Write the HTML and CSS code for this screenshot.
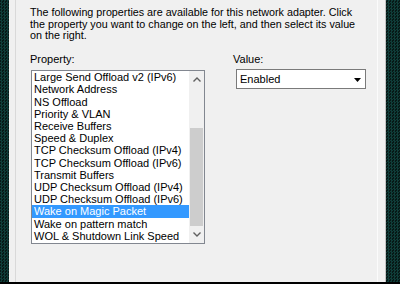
FILE: index.html
```html
<!DOCTYPE html>
<html lang="en">
  <head>
    <meta charset="utf-8">
    <title>Advanced - Network adapter properties</title>
    <link rel="stylesheet" href="styles.css">
  </head>
  <body>
    <div class="desk">
      <div class="dialog">
        <div class="page">
          <p class="intro">
            The following properties are available for this network adapter. Click<br>
            the property you want to change on the left, and then select its value<br>
            on the right.
          </p>

          <div class="fields">
            <div class="field prop">
              <div class="label">Property:</div>
              <div class="listbox">
                <ul class="items">
                  <li>Large Send Offload v2 (IPv6)</li>
                  <li>Network Address</li>
                  <li>NS Offload</li>
                  <li>Priority &amp; VLAN</li>
                  <li>Receive Buffers</li>
                  <li>Speed &amp; Duplex</li>
                  <li>TCP Checksum Offload (IPv4)</li>
                  <li>TCP Checksum Offload (IPv6)</li>
                  <li>Transmit Buffers</li>
                  <li>UDP Checksum Offload (IPv4)</li>
                  <li>UDP Checksum Offload (IPv6)</li>
                  <li class="selected">Wake on Magic Packet</li>
                  <li>Wake on pattern match</li>
                  <li>WOL &amp; Shutdown Link Speed</li>
                </ul>
                <div class="scrollbar">
                  <div class="arrow">
                    <svg width="8" height="5" viewBox="0 0 8 5"><path d="M0.5 4.5 L4 1 L7.5 4.5" fill="none" stroke="#606060" stroke-width="1.4"/></svg>
                  </div>
                  <div class="track"><div class="thumb"></div></div>
                  <div class="arrow">
                    <svg width="8" height="5" viewBox="0 0 8 5"><path d="M0.5 0.5 L4 4 L7.5 0.5" fill="none" stroke="#606060" stroke-width="1.4"/></svg>
                  </div>
                </div>
              </div>
            </div>

            <div class="field value">
              <div class="label">Value:</div>
              <div class="combo">
                <span>Enabled</span>
                <svg width="7" height="4" viewBox="0 0 7 4"><path d="M0 0 H7 L3.5 4 Z" fill="#000"/></svg>
              </div>
            </div>
          </div>
        </div>
      </div>
    </div>
    <div class="taskbar"></div>
  </body>
</html>
```

FILE: styles.css
```css
body {
  margin: 0;
  height: 284px;
  overflow: hidden;
  display: flex;
  flex-direction: column;
  font-family: "Liberation Sans", Arial, sans-serif;
  font-size: 11px;
  color: #000;
  background-color: #0a2624;
  background-image: repeating-conic-gradient(#0f3d39 0 25%, #071816 0 50%);
  background-size: 3px 3px;
}

.desk
{
  flex: 1;
  display: flex;
  padding-left: 9px;
}

.dialog
{
  width: 377px;
  background: #f0f0f0;
  border-right: 1px solid #c4c4c4;
  display: flex;
  padding-left: 6px;
  padding-right: 7px;
  box-sizing: border-box;
}

.page
{
  flex: 1;
  border-left: 1px solid #d9d9d9;
  border-right: 1px solid #fbfbfb;
  padding: 7px 0 0 14px;
}

.intro
{
  margin: 0;
  font-size: 10.75px;
  line-height: 11.7px;
  white-space: nowrap;
}

.fields
{
  display: flex;
  margin-top: 11px;
}

.label
{
  line-height: 12px;
}

.prop .listbox
{
  margin: 5px 0 0 1px;
}

.value
{
  margin-left: 28px;
}

.listbox
{
  display: flex;
  width: 174px;
  height: 174px;
  box-sizing: border-box;
  border: 1px solid #828790;
  background: #fff;
}

.items
{
  list-style: none;
  margin: 0;
  padding: 0;
  flex: 1;
}

.items li
{
  line-height: 12.2px;
  padding-left: 2px;
  white-space: nowrap;
}

.items li.selected
{
  background: #3399ff;
  color: #fff;
}

.scrollbar
{
  width: 15px;
  display: flex;
  flex-direction: column;
  background: #f0f0f0;
}

.arrow
{
  height: 17px;
  display: flex;
  align-items: center;
  justify-content: center;
}

.track
{
  flex: 1;
  display: flex;
  flex-direction: column;
  justify-content: flex-end;
}

.thumb
{
  height: 98px;
  margin: 0 1px;
  background: #cdcdcd;
}

.combo
{
  margin: 4px 0 0 3px;
  width: 130px;
  height: 20px;
  box-sizing: border-box;
  border: 1px solid #7a7a7a;
  background: #fff;
  display: flex;
  align-items: center;
  justify-content: space-between;
  padding: 0 4px 0 3px;
}

.combo svg
{
  margin-top: 1px;
}

.taskbar
{
  height: 2px;
  background: #000;
}
```
